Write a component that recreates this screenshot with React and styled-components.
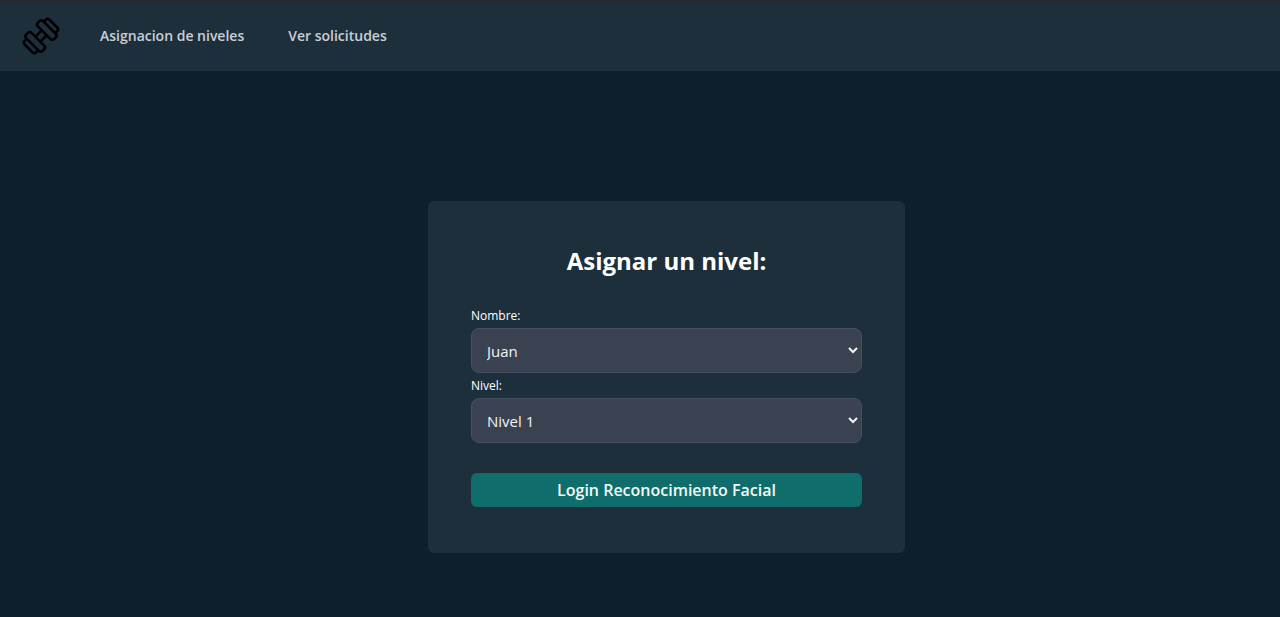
import React from "react";
import styled, { createGlobalStyle } from "styled-components";

const GlobalStyle = createGlobalStyle`
  *, *::before, *::after { box-sizing: border-box; }
  body {
    margin: 0;
    background: #0d1f2d;
    color: #fff;
    font-family: "Segoe UI", "Open Sans", "Noto Sans", sans-serif;
  }
`;

const Page = styled.div`
  min-height: 100vh;
  display: flex;
  flex-direction: column;
`;

const Navbar = styled.header`
  display: flex;
  align-items: center;
  gap: 40px;
  height: 71px;
  padding: 0 22px 2px;
  background: #1e2f3c;
  border-top: 3px solid #22292f;
  border-bottom: 1px solid #20303e;
`;

const Brand = styled.a`
  display: flex;
  color: #000;
`;

const NavLinks = styled.nav`
  display: flex;
  gap: 44px;
`;

const NavLink = styled.a`
  color: #c9cfd6;
  font-size: 14px;
  font-weight: 600;
  line-height: 24px;
  text-decoration: none;
`;

const Main = styled.main`
  flex: 1;
  display: flex;
  align-items: center;
  justify-content: center;
  padding: 130px 0 64px 53px;
`;

const Card = styled.form`
  width: 477px;
  max-width: 100%;
  padding: 42px 43px 46px;
  display: flex;
  flex-direction: column;
  border-radius: 6px;
  background: #1e2f3c;
`;

const Title = styled.h1`
  margin: 0 0 27px;
  font-size: 24px;
  font-weight: 700;
  line-height: 36px;
  text-align: center;
`;

const Label = styled.label`
  font-size: 12px;
  line-height: 20px;
  padding-bottom: 2px;
`;

const Select = styled.select`
  width: 100%;
  height: 45px;
  margin-bottom: 3px;
  padding: 0 1px 0 11px;
  border: 1px solid #465061;
  border-radius: 8px;
  background: #3a4151;
  color: #f3f4f6;
  font-family: inherit;
  font-size: 15px;
`;

const SubmitButton = styled.button`
  height: 34px;
  margin-top: 27px;
  padding: 0;
  border: 0;
  border-radius: 6px;
  background: #0f6e6b;
  color: #f0fdfa;
  font-family: inherit;
  font-size: 16px;
  font-weight: 600;
  line-height: 24px;
`;

function DumbbellLogo() {
  return (
    <svg width="38" height="38" viewBox="-19 -19 38 38" fill="none" stroke="currentColor" strokeWidth="2.6" strokeLinejoin="round" aria-hidden="true">
      <g transform="rotate(-45)">
        <rect x="4.5" y="-11.5" width="7.5" height="23" rx="2.5" />
        <rect x="-12" y="-11.5" width="7.5" height="23" rx="2.5" />
        <path d="M-4.5 -3.5H4.5M-4.5 3.5H4.5" />
        <path d="M12 -8H15Q17.5 -8 17.5 -5.5V5.5Q17.5 8 15 8H12" />
        <path d="M-12 -8H-15Q-17.5 -8 -17.5 -5.5V5.5Q-17.5 8 -15 8H-12" />
      </g>
    </svg>
  );
}

export default function App() {
  return (
    <>
      <GlobalStyle />
      <Page>
        <Navbar>
          <Brand href="#" aria-label="Inicio">
            <DumbbellLogo />
          </Brand>
          <NavLinks>
            <NavLink href="#niveles">Asignacion de niveles</NavLink>
            <NavLink href="#solicitudes">Ver solicitudes</NavLink>
          </NavLinks>
        </Navbar>
        <Main>
          <Card>
            <Title>Asignar un nivel:</Title>
            <Label htmlFor="nombre">Nombre:</Label>
            <Select id="nombre" name="nombre">
              <option>Juan</option>
            </Select>
            <Label htmlFor="nivel">Nivel:</Label>
            <Select id="nivel" name="nivel">
              <option>Nivel 1</option>
            </Select>
            <SubmitButton type="button">Login Reconocimiento Facial</SubmitButton>
          </Card>
        </Main>
      </Page>
    </>
  );
}
